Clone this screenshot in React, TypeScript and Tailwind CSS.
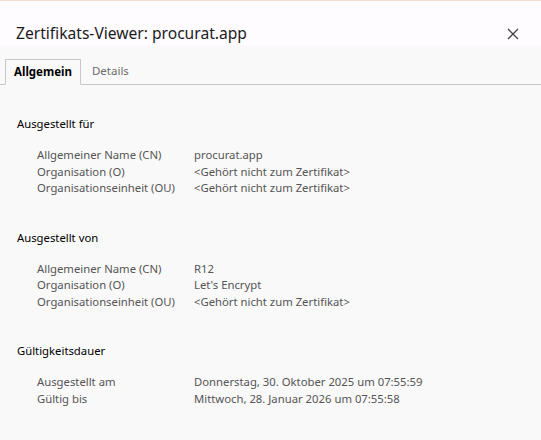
import React from "react";

const sections = [
  {
    title: "Ausgestellt für",
    rows: [
      ["Allgemeiner Name (CN)", "procurat.app"],
      ["Organisation (O)", "<Gehört nicht zum Zertifikat>"],
      ["Organisationseinheit (OU)", "<Gehört nicht zum Zertifikat>"],
    ],
  },
  {
    title: "Ausgestellt von",
    rows: [
      ["Allgemeiner Name (CN)", "R12"],
      ["Organisation (O)", "Let's Encrypt"],
      ["Organisationseinheit (OU)", "<Gehört nicht zum Zertifikat>"],
    ],
  },
  {
    title: "Gültigkeitsdauer",
    rows: [
      ["Ausgestellt am", "Donnerstag, 30. Oktober 2025 um 07:55:59"],
      ["Gültig bis", "Mittwoch, 28. Januar 2026 um 07:55:58"],
    ],
  },
];

export default function App() {
  return (
    <div className="w-[541px] h-[440px] overflow-hidden bg-[#f9f9f9] font-['Noto_Sans',sans-serif] border-t border-[#f7dfcf]">
      {/* header */}
      <div className="h-[44px] bg-[#fefcfe] flex items-end justify-between pl-[16px] pr-[22px] pb-[1px]">
        <h1 className="text-[15.6px] leading-[22px] text-[#1a1a1a]">
          Zertifikats-Viewer: procurat.app
        </h1>
        <button className="mb-[4px] text-[#444]">
          <svg width="12" height="12" viewBox="0 0 12 12">
            <path d="M1 1L11 11M11 1L1 11" stroke="currentColor" strokeWidth="1.3" />
          </svg>
        </button>
      </div>

      {/* tabs */}
      <div className="mt-[14px] flex items-end border-b border-[#c8c8c8] pl-[5px] h-[26px]">
        <div className="h-[26px] -mb-px px-[8px] flex items-center bg-[#f9f9f9] border border-[#c8c8c8] border-b-[#f9f9f9] text-[11.5px] font-bold text-black">
          Allgemein
        </div>
        <div className="h-[26px] px-[11px] flex items-center text-[11.5px] text-[#6b6b6b]">
          Details
        </div>
      </div>

      {/* content */}
      <div className="pl-[17px] pt-[31px]">
        {sections.map((s) => (
          <div key={s.title} className="mb-[33px]">
            <div className="text-[11.3px] leading-[16px] text-black">{s.title}</div>
            <div className="mt-[15px] pl-[20px]">
              {s.rows.map(([k, v]) => (
                <div key={k} className="flex text-[11.3px] leading-[16.5px] text-[#555]">
                  <div className="w-[157px] shrink-0">{k}</div>
                  <div>{v}</div>
                </div>
              ))}
            </div>
          </div>
        ))}
      </div>
    </div>
  );
}
